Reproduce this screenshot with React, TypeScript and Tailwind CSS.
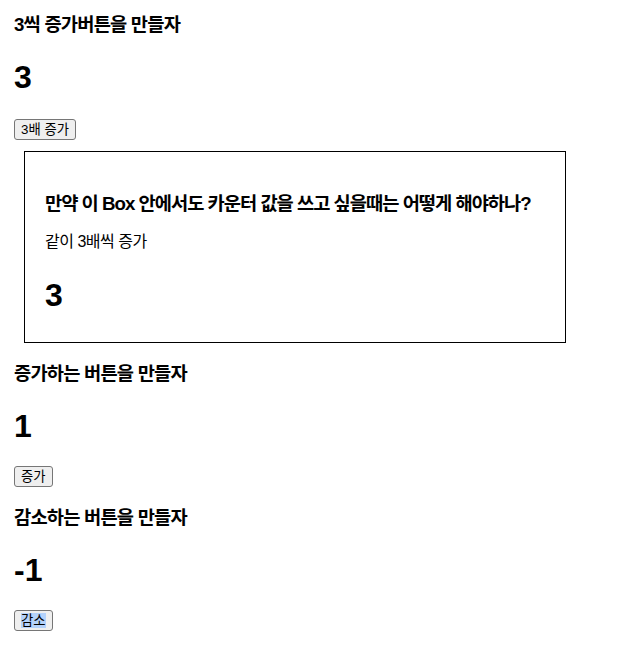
import React, { useState } from 'react'

const FONT = "font-['Liberation_Sans','Noto_Sans_CJK_KR',sans-serif]"

function Btn({ label, onClick, selected }: { label: string; onClick: () => void; selected?: boolean }) {
  return (
    <button
      onClick={onClick}
      className="block border border-[#767676] rounded-[3px] bg-[#efefef] px-[6px] text-[13.33px] leading-[19px] text-black"
    >
      {selected ? <span className="bg-[#b4d2fb]">{label}</span> : label}
    </button>
  )
}

export default function App() {
  const [triple, setTriple] = useState(3)
  const [inc, setInc] = useState(1)
  const [dec, setDec] = useState(-1)

  return (
    <div className={`${FONT} text-black px-[14px] pt-[14px] pb-[20px]`}>
      {/* 3씩 증가 */}
      <h3 className="text-[18.72px] font-bold leading-[22px] tracking-[-0.8px]">3씩 증가버튼을 만들자</h3>
      <h1 className="mt-[23px] text-[32px] font-bold leading-[37px]">{triple}</h1>
      <div className="mt-[23px]">
        <Btn label="3배 증가" onClick={() => setTriple(triple * 3)} />
      </div>

      <div className="mt-[11px] ml-[10px] w-[542px] border border-black px-[20px] pt-[41px] pb-[28px]">
        <h3 className="text-[18.72px] font-bold leading-[22px] tracking-[-1px] whitespace-nowrap">
          만약 이 Box 안에서도 카운터 값을 쓰고 싶을때는 어떻게 해야하나?
        </h3>
        <p className="mt-[18px] text-base leading-[18px] tracking-[-0.5px]">같이 3배씩 증가</p>
        <h1 className="mt-[26px] text-[32px] font-bold leading-[37px]">{triple}</h1>
      </div>

      {/* 증가 */}
      <h3 className="mt-[20px] text-[18.72px] font-bold leading-[22px] tracking-[-0.8px]">증가하는 버튼을 만들자</h3>
      <h1 className="mt-[23px] text-[32px] font-bold leading-[37px]">{inc}</h1>
      <div className="mt-[21px]">
        <Btn label="증가" onClick={() => setInc(inc + 1)} />
      </div>

      {/* 감소 */}
      <h3 className="mt-[20px] text-[18.72px] font-bold leading-[22px] tracking-[-0.8px]">감소하는 버튼을 만들자</h3>
      <h1 className="mt-[23px] text-[32px] font-bold leading-[37px]">{dec}</h1>
      <div className="mt-[21px]">
        <Btn label="감소" selected onClick={() => setDec(dec - 1)} />
      </div>
    </div>
  )
}
